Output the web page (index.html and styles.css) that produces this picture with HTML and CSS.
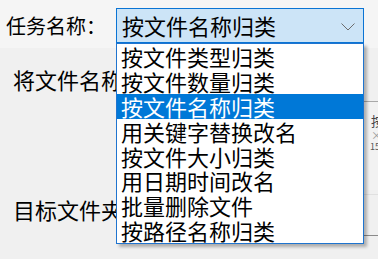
FILE: index.html
```html
<!DOCTYPE html>
<html lang="zh-CN">
<head>
<meta charset="utf-8">
<link rel="stylesheet" href="styles.css">
</head>
<body>
<div class="app">
  <div class="topbar">
    <div class="task-label">任务名称：</div>
    <div class="combo">
      <span class="combo-text">按文件名称归类</span>
      <svg class="chevron" width="14" height="8" viewBox="0 0 14 8"><polyline points="0.5,0.5 7,7 13.5,0.5" fill="none" stroke="#6d6d6d" stroke-width="1"/></svg>
      <ul class="dropdown">
        <li>按文件类型归类</li>
        <li>按文件数量归类</li>
        <li class="selected">按文件名称归类</li>
        <li>用关键字替换改名</li>
        <li>按文件大小归类</li>
        <li>用日期时间改名</li>
        <li>批量删除文件</li>
        <li>按路径名称归类</li>
      </ul>
    </div>
  </div>
  <div class="form">
    <div class="row-label first">将文件名称</div>
    <div class="field field-keys">
      <div class="keys">
        <span>按</span>
        <span class="x">×</span>
        <span class="num">15</span>
      </div>
    </div>
    <div class="row-label target">目标文件夹</div>
    <div class="field field-target"></div>
  </div>
</div>
</body>
</html>
```

FILE: styles.css
```css
html, body {
  margin: 0;
  padding: 0;
}
body {
  width: 378px;
  height: 259px;
  overflow: hidden;
  background: #f0f0f0;
  font-family: "Noto Sans CJK SC", "Noto Sans CJK JP", sans-serif;
  color: #000;
}
.app {
  width: 378px;
  height: 259px;
  overflow: hidden;
}
.topbar {
  height: 48px;
  box-sizing: border-box;
  background: #f5f5f5;
  display: flex;
  align-items: flex-start;
  padding: 8px 0 0 6px;
}
.task-label {
  width: 110px;
  font-size: 20px;
  line-height: 35px;
  white-space: nowrap;
}
.combo {
  position: relative;
  z-index: 5;
  width: 248px;
  height: 35px;
  box-sizing: border-box;
  border: 1px solid #0a74d4;
  background: #cce4f7;
  display: flex;
  align-items: center;
  padding-left: 5px;
}
.combo-text {
  font-size: 22px;
  line-height: 33px;
  white-space: nowrap;
}
.chevron {
  margin-left: auto;
  margin-right: 8px;
  margin-top: 2px;
}
.dropdown {
  position: absolute;
  left: -1px;
  top: 34px;
  width: 248px;
  box-sizing: border-box;
  margin: 0;
  padding: 0;
  list-style: none;
  background: #fff;
  border: 1px solid #1f74cf;
  box-shadow: 3px 3px 3px rgba(0, 0, 0, 0.28);
}
.dropdown li {
  height: 24.875px;
  font-size: 22px;
  line-height: 24.875px;
  padding-left: 4px;
  white-space: nowrap;
}
.dropdown li.selected {
  background: #0078d7;
  color: #fff;
}
.form {
  display: grid;
  grid-template-columns: 107px 1fr;
  grid-template-rows: 37px 89px 42px;
  padding: 16px 0 0 13px;
}
.row-label {
  grid-column: 1;
  font-size: 22px;
  line-height: 30px;
  white-space: nowrap;
}
.row-label.first {
  grid-row: 1;
}
.field-keys {
  grid-column: 2;
  grid-row: 2;
  height: 89px;
  box-sizing: border-box;
  border-top: 1px solid #a9a9a9;
  background: #f2f2f2;
  margin-right: -6px;
}
.keys {
  display: flex;
  flex-direction: column;
  align-items: flex-end;
  font-size: 11px;
  line-height: 12px;
  color: #555;
  padding-top: 13px;
}
.keys span:first-child {
  font-size: 13px;
  color: #444;
  margin-bottom: 2px;
}
.keys .x {
  color: #999;
  margin-right: 2px;
}
.keys .num {
  margin-right: 4px;
  font-size: 9px;
}
.target {
  grid-row: 3;
  margin-top: 4px;
}
.field-target {
  grid-column: 2;
  grid-row: 3;
  margin-top: 4px;
  height: 42px;
  box-sizing: border-box;
  border-top: 1px solid #e0e0e0;
  border-bottom: 1px solid #8a8a8a;
  background: #f0f0f0;
}
```
